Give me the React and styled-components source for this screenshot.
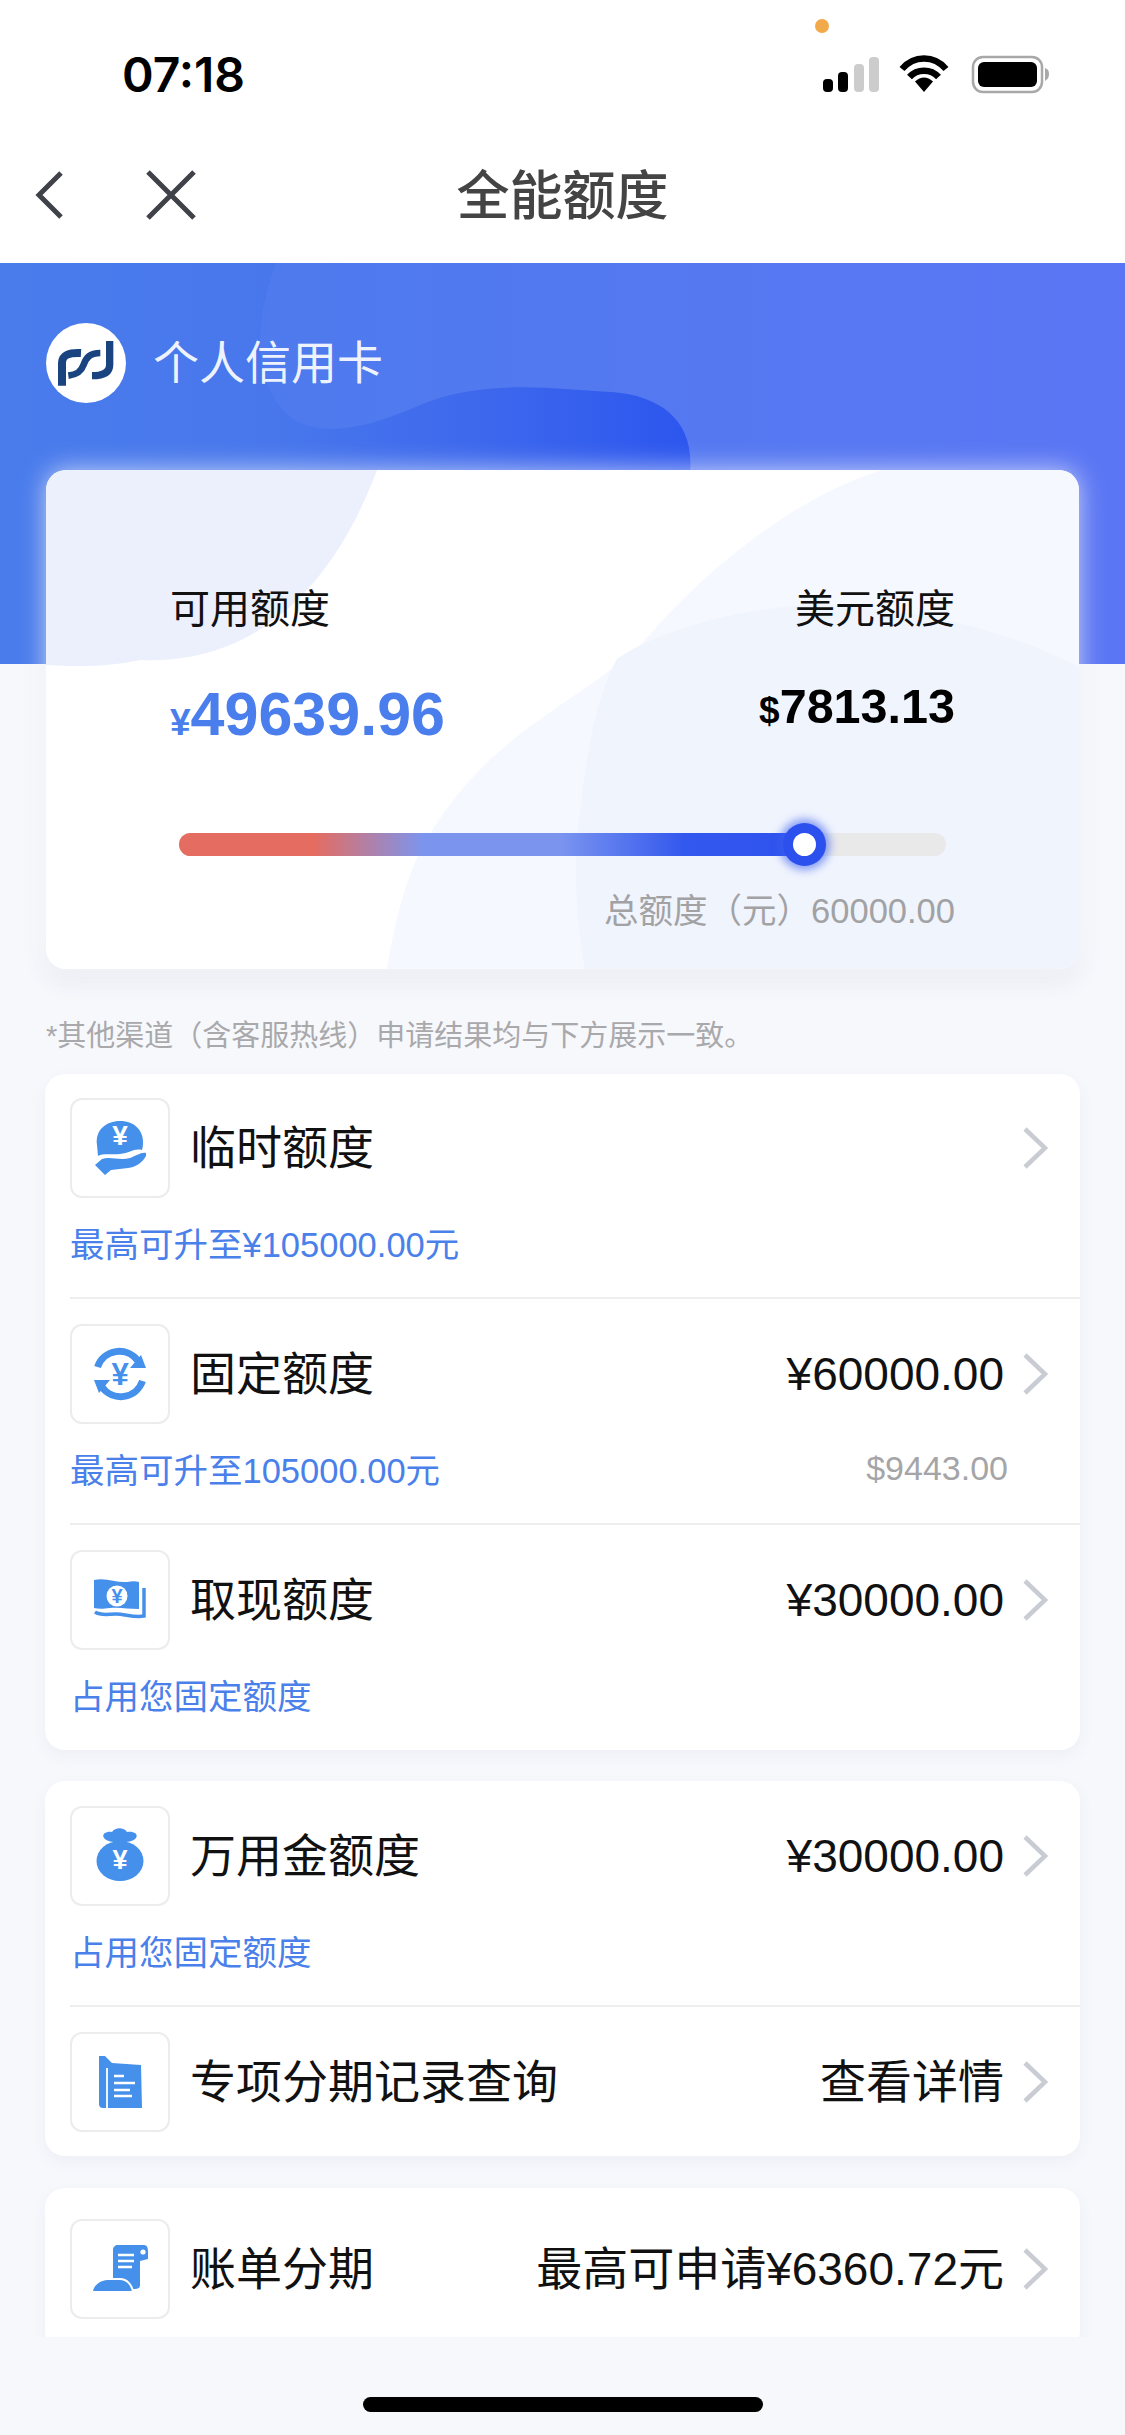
import React from "react";
import styled, { createGlobalStyle } from "styled-components";

const FONT = `"Liberation Sans", "Noto Sans CJK SC", sans-serif`;
const ICON_BLUE = "#4590ea";
const LINK_BLUE = "#4a80ea";

const GlobalStyle = createGlobalStyle`
    html, body {
        margin: 0;
        padding: 0;
        background: #f7f8fc;
    }
    * {
        box-sizing: border-box;
    }
`;

const Page = styled.div`
    width: 1125px;
    height: 2435px;
    display: flex;
    flex-direction: column;
    overflow: hidden;
    background: #f7f8fc;
    font-family: ${FONT};
`;

const StatusBar = styled.div`
    position: relative;
    height: 130px;
    flex-shrink: 0;
    background: #fff;
    display: flex;
    justify-content: space-between;
    align-items: flex-start;
    padding: 51px 72px 0 122px;
`;

const Time = styled.span`
    font-family: Inter, sans-serif;
    font-weight: 600;
    font-size: 48px;
    line-height: 48px;
    letter-spacing: 0;
    color: #000;
`;

const CameraDot = styled.span`
    position: absolute;
    left: 815px;
    top: 19px;
    width: 14px;
    height: 14px;
    border-radius: 50%;
    background: #f2a94a;
`;

const NavBar = styled.div`
    position: relative;
    height: 133px;
    flex-shrink: 0;
    background: #fff;
    display: flex;
    align-items: center;
    justify-content: center;
`;

const NavTitle = styled.h1`
    margin: 0;
    font-size: 53px;
    font-weight: 500;
    line-height: 64px;
    color: #444;
`;

const NavButtons = styled.div`
    position: absolute;
    left: 34px;
    top: 40px;
    display: flex;
    gap: 82px;
`;

const Scroller = styled.div`
    flex: 1;
    min-height: 0;
    overflow: hidden;
`;

const Hero = styled.div`
    position: relative;
    padding: 60px 46px 0 46px;
`;

const HeroBackdrop = styled.svg`
    position: absolute;
    left: 0;
    top: 0;
    width: 1125px;
    height: 401px;
    display: block;
`;

const Brand = styled.div`
    position: relative;
    display: flex;
    align-items: center;
    gap: 27px;
    height: 80px;
`;

const BrandLogo = styled.div`
    width: 80px;
    height: 80px;
    border-radius: 50%;
    background: #fff;
    overflow: hidden;
`;

const BrandName = styled.span`
    font-size: 46px;
    line-height: 60px;
    color: rgba(255, 255, 255, 0.92);
`;

const QuotaShadow = styled.div`
    position: relative;
    margin-top: 67px;
    border-radius: 20px;
    box-shadow: 0 0 26px rgba(255, 255, 255, 0.7), 0 12px 24px rgba(50, 70, 120, 0.09);
`;

const QuotaCard = styled.section`
    position: relative;
    width: 1033px;
    height: 499px;
    padding: 114px 124px 0;
    border-radius: 20px;
    overflow: hidden;
    background: #fff;
`;

const CardBackdrop = styled.svg`
    position: absolute;
    left: 0;
    top: 0;
    width: 1033px;
    height: 499px;
`;

const QuotaTop = styled.div`
    position: relative;
    display: flex;
    justify-content: space-between;
    height: 165px;
`;

const QuotaColumn = styled.div`
    display: flex;
    flex-direction: column;
    align-items: ${(p) => (p.$right ? "flex-end" : "flex-start")};
`;

const QuotaLabel = styled.div`
    font-size: 40px;
    line-height: 50px;
    color: #111;
`;

const QuotaAmount = styled.div`
    margin-top: ${(p) => p.$top}px;
    font-weight: 700;
    line-height: 70px;
    font-size: ${(p) => p.$size}px;
    color: ${(p) => p.$color};
    white-space: nowrap;
`;

const Currency = styled.span`
    font-size: 37px;
`;

const Track = styled.div`
    position: relative;
    height: 23px;
    margin: 84px 9px 0 9px;
    border-radius: 12px;
    background: #e9e9ea;
`;

const TrackFill = styled.div`
    height: 100%;
    border-radius: 12px 0 0 12px;
    background: linear-gradient(
        to right,
        #e56c60 0,
        #e56c60 135px,
        #7b95ef 245px,
        #7b95ef 380px,
        #3358ee 505px,
        #2f52ee 100%
    );
`;

const Thumb = styled.span`
    position: absolute;
    top: 0;
    width: 23px;
    height: 23px;
    margin-left: -11px;
    border-radius: 50%;
    background: #fff;
    box-shadow: 0 0 0 10px #2b50ee, 0 0 8px 14px rgba(60, 95, 240, 0.6);
`;

const TotalLine = styled.div`
    position: relative;
    margin-top: 35px;
    text-align: right;
    font-size: 34.5px;
    line-height: 40px;
    color: #a2a2a4;
`;

const Notice = styled.p`
    margin: 47px 46px 18px;
    font-size: 29px;
    line-height: 40px;
    color: #a9a9ac;
    white-space: nowrap;
`;

const Panel = styled.section`
    margin: ${(p) => p.$top || 0}px 45px 0;
    background: #fff;
    border-radius: 20px;
    box-shadow: 0 6px 16px rgba(60, 80, 130, 0.05);
`;

const Row = styled.div`
    margin-left: 25px;
    padding: ${(p) => p.$pt}px 32px ${(p) => p.$pb}px 0;
    border-top: ${(p) => (p.$line ? "2px solid #eeeeef" : "none")};
`;

const RowMain = styled.div`
    display: flex;
    align-items: center;
    height: 100px;
`;

const IconBox = styled.div`
    width: 100px;
    height: 100px;
    flex-shrink: 0;
    border: 2px solid #ececee;
    border-radius: 12px;
    background: #fff;
`;

const IconSvg = styled.svg`
    display: block;
    width: 96px;
    height: 96px;
`;

const RowTitle = styled.span`
    margin-left: 20px;
    font-size: 46px;
    line-height: 60px;
    color: #111;
    white-space: nowrap;
`;

const RowValue = styled.span`
    margin-left: auto;
    font-size: 46px;
    line-height: 60px;
    color: #111;
    white-space: nowrap;
`;

const Chevron = styled.svg`
    margin-left: ${(p) => (p.$solo ? "auto" : "19px")};
    width: 25px;
    height: 42px;
    flex-shrink: 0;
`;

const RowSub = styled.div`
    display: flex;
    justify-content: space-between;
    margin-top: 27px;
    padding-right: 40px;
    font-size: 34.5px;
    line-height: 40px;
`;

const SubLink = styled.span`
    color: ${LINK_BLUE};
    white-space: nowrap;
`;

const SubNote = styled.span`
    margin-top: -3px;
    font-size: 34px;
    color: #a5a5a8;
`;

const HomeBar = styled.div`
    height: 98px;
    flex-shrink: 0;
    display: flex;
    justify-content: center;
    padding-top: 60px;
    background: #f7f8fc;
`;

const HomeIndicator = styled.span`
    width: 400px;
    height: 15px;
    border-radius: 8px;
    background: #000;
`;

const StatusIcons = () => (
    <svg width="230" height="42" viewBox="823 54 230 42" style={{ marginTop: 3 }}>
        <rect x="823" y="79" width="10" height="13" rx="4" fill="#000" />
        <rect x="838" y="72" width="10" height="20" rx="4" fill="#000" />
        <rect x="854" y="64" width="10" height="28" rx="4" fill="#ccc" />
        <rect x="869" y="57" width="10" height="35" rx="4" fill="#ccc" />
        <path d="M902 69 C914 55 934 55 946 69" fill="none" stroke="#000" strokeWidth="6.5" />
        <path d="M909.5 77 C917 68.5 931 68.5 938.5 77" fill="none" stroke="#000" strokeWidth="6.5" />
        <path d="M915 81.5 C921 76 927 76 933 81.5 L924 92 Z" fill="#000" />
        <rect x="973" y="57" width="69" height="35" rx="10" fill="none" stroke="#a8a8a8" strokeWidth="2.5" />
        <rect x="978" y="62" width="59" height="25" rx="6" fill="#000" />
        <path d="M1045 68 C1048 69 1049 71 1049 74 C1049 77 1048 79 1045 81 Z" fill="#a8a8a8" />
    </svg>
);

const BrandMark = () => (
    <svg width="80" height="80" viewBox="45 70 240 240" fill="none" stroke="#1a4480">
        <path d="M93 258 L93 190 C93 166 115 158 150 160" strokeWidth="24" />
        <path d="M208 160 C175 160 165 175 158 195 C150 218 135 225 112 228" strokeWidth="20" />
        <path d="M236 124 L236 195 C236 220 215 228 183 228" strokeWidth="22" />
    </svg>
);

const YenMark = ({ x, y, size, color = "#fff" }) => (
    <text x={x} y={y} fontSize={size} fontWeight="700" fontFamily="Liberation Sans, sans-serif" fill={color} textAnchor="middle">
        ¥
    </text>
);

const HandCoinIcon = () => (
    <>
        <path d="M27 47 C25 32 36 23 50 23 C65 23 74 33 73 46 C73 48 72.5 50 72 52 C64 50 60 55 50 56 C42 57 33 55 28 58 Z" fill={ICON_BLUE} />
        <path d="M25 67 L32 61 C40 58 50 63 60 60 C66 58 71 54 76 55 L76 58 C72 65 66 69 58 70 L41 72 L35 77 Z" fill={ICON_BLUE} />
        <YenMark x={50} y={47} size={28} />
    </>
);

const ExchangeIcon = () => (
    <>
        <path d="M27.5 43 A23 23 0 0 1 68 37" fill="none" stroke={ICON_BLUE} strokeWidth="7" />
        <path d="M72.5 57 A23 23 0 0 1 32 63" fill="none" stroke={ICON_BLUE} strokeWidth="7" />
        <path d="M76 44 L60 44 L71 31 Z" fill={ICON_BLUE} />
        <path d="M24 56 L40 56 L29 69 Z" fill={ICON_BLUE} />
        <YenMark x={50} y={61} size={31} color={ICON_BLUE} />
    </>
);

const BillIcon = () => (
    <>
        <path d="M24 30 C36 27 46 33 57 32 C62 31 66 31 69 32 L69 59 C58 59 50 57 40 58 C33 59 28 59 24 58 Z" fill={ICON_BLUE} />
        <circle cx="47" cy="46" r="10.5" fill="#fff" />
        <YenMark x={47} y={53} size={20} color={ICON_BLUE} />
        <path d="M74 38 L74 66 C64 68 55 64 46 64 C38 64 31 66 25 62" fill="none" stroke={ICON_BLUE} strokeWidth="3.5" />
    </>
);

const MoneyBagIcon = () => (
    <>
        <ellipse cx="50" cy="55" rx="23.5" ry="20" fill={ICON_BLUE} />
        <path d="M34 32 C31 27 38 25 42 26 C45 21 54 21 57 26 C62 25 69 27 66 32 C62 38 38 38 34 32 Z" fill={ICON_BLUE} />
        <YenMark x={50} y={63} size={27} />
    </>
);

const FolderIcon = () => (
    <>
        <path d="M29 24 L35 24 L42 31 L71 33 L72 76 L33 76 C30 76 29 74 29 72 Z" fill={ICON_BLUE} />
        <path d="M37 36 L37 76" fill="none" stroke="#fff" strokeWidth="1.8" />
        <path d="M44 44 L54 44 M44 51 L65 51 M44 58 L60 58 M44 64 L62 64" fill="none" stroke="#fff" strokeWidth="2.4" />
    </>
);

const ScrollHandIcon = () => (
    <>
        <path d="M43 31 C43 28 45 26 48 26 L74 26 C77 26 78 29 78 32 L78 40 L70 42 L70 66 C70 69 68 70 65 70 L43 70 Z" fill={ICON_BLUE} />
        <circle cx="73" cy="33" r="2.6" fill="#fff" />
        <path d="M48 36 L64 36 M48 42 L64 42 M48 48 L62 48" fill="none" stroke="#fff" strokeWidth="2.6" />
        <path d="M22 73 C22 66 30 60 38 60 L50 60 C57 60 62 66 63 73 Z" fill={ICON_BLUE} stroke="#fff" strokeWidth="2" />
    </>
);

const RowIcon = ({ children }) => (
    <IconBox>
        <IconSvg viewBox="2 2 96 96">{children}</IconSvg>
    </IconBox>
);

const RowChevron = ({ solo }) => (
    <Chevron $solo={solo} viewBox="0 0 25 42" fill="none" stroke="#c9ccd3" strokeWidth="4.5">
        <path d="M2 2 L22 21 L2 40" />
    </Chevron>
);

const QuotaRow = ({ icon, title, value, sub, note, line, pt = 25, pb = 32 }) => (
    <Row $line={line} $pt={pt} $pb={pb}>
        <RowMain>
            <RowIcon>{icon}</RowIcon>
            <RowTitle>{title}</RowTitle>
            {value && <RowValue>{value}</RowValue>}
            <RowChevron solo={!value} />
        </RowMain>
        {sub && (
            <RowSub>
                <SubLink>{sub}</SubLink>
                {note && <SubNote>{note}</SubNote>}
            </RowSub>
        )}
    </Row>
);

const App = () => {
    const used = 624 / 766;

    return (
        <>
            <GlobalStyle />
            <Page>
                <StatusBar>
                    <Time>07:18</Time>
                    <CameraDot />
                    <StatusIcons />
                </StatusBar>
                <NavBar>
                    <NavButtons>
                        <svg width="30" height="50" viewBox="0 0 30 50" fill="none" stroke="#3f4248" strokeWidth="5">
                            <path d="M27 3 L5 25 L27 47" />
                        </svg>
                        <svg width="50" height="50" viewBox="0 0 50 50" fill="none" stroke="#3f4248" strokeWidth="5">
                            <path d="M2 2 L48 48 M48 2 L2 48" />
                        </svg>
                    </NavButtons>
                    <NavTitle>全能额度</NavTitle>
                </NavBar>
                <Scroller>
                    <Hero>
                        <HeroBackdrop viewBox="0 263 1125 401" preserveAspectRatio="none">
                            <defs>
                                <linearGradient id="heroBase" x1="0" x2="1" y1="0" y2="0">
                                    <stop offset="0" stopColor="#4a7cec" />
                                    <stop offset="1" stopColor="#5b76f4" />
                                </linearGradient>
                                <linearGradient id="heroWave" gradientUnits="userSpaceOnUse" x1="0" x2="690" y1="0" y2="0">
                                    <stop offset="0" stopColor="#4a7cec" />
                                    <stop offset="0.4" stopColor="#4877ec" />
                                    <stop offset="0.7" stopColor="#3d68ed" />
                                    <stop offset="1" stopColor="#2c56ee" />
                                </linearGradient>
                            </defs>
                            <rect x="0" y="263" width="1125" height="401" fill="url(#heroBase)" />
                            <path
                                d="M276 263 C255 320 250 385 292 418 C325 440 375 425 425 403 C490 378 560 390 612 392 C665 396 698 425 689 480 L689 664 L0 664 L0 263 Z"
                                fill="url(#heroWave)"
                            />
                        </HeroBackdrop>
                        <Brand>
                            <BrandLogo>
                                <BrandMark />
                            </BrandLogo>
                            <BrandName>个人信用卡</BrandName>
                        </Brand>
                        <QuotaShadow>
                            <QuotaCard>
                                <CardBackdrop viewBox="0 0 1033 499">
                                    <path d="M0 0 L331 0 C290 110 215 195 95 190 C60 197 30 197 0 195 Z" fill="#ebf0fc" />
                                    <path d="M341 499 C352 430 368 385 391 353 C455 255 540 230 599 170 C650 110 740 30 836 0 L1033 0 L1033 499 Z" fill="#f5f8fe" />
                                    <path d="M539 499 C528 440 528 380 535 334 C541 280 552 222 571 189 C602 166 690 135 779 135 C880 140 960 160 1033 197 L1033 499 Z" fill="#f0f4fd" />
                                </CardBackdrop>
                                <QuotaTop>
                                    <QuotaColumn>
                                        <QuotaLabel>可用额度</QuotaLabel>
                                        <QuotaAmount $top={45} $size={61} $color="#4a7eec">
                                            <Currency>¥</Currency>49639.96
                                        </QuotaAmount>
                                    </QuotaColumn>
                                    <QuotaColumn $right>
                                        <QuotaLabel>美元额度</QuotaLabel>
                                        <QuotaAmount $top={37} $size={48.5} $color="#000">
                                            <Currency>$</Currency>7813.13
                                        </QuotaAmount>
                                    </QuotaColumn>
                                </QuotaTop>
                                <Track>
                                    <TrackFill style={{ width: `${used * 100}%` }} />
                                    <Thumb style={{ left: `${used * 100}%` }} />
                                </Track>
                                <TotalLine>总额度（元）60000.00</TotalLine>
                            </QuotaCard>
                        </QuotaShadow>
                    </Hero>
                    <Notice>*其他渠道（含客服热线）申请结果均与下方展示一致。</Notice>
                    <Panel>
                        <QuotaRow icon={<HandCoinIcon />} title="临时额度" sub="最高可升至¥105000.00元" pt={24} />
                        <QuotaRow
                            line
                            icon={<ExchangeIcon />}
                            title="固定额度"
                            value="¥60000.00"
                            sub="最高可升至105000.00元"
                            note="$9443.00"
                        />
                        <QuotaRow line icon={<BillIcon />} title="取现额度" value="¥30000.00" sub="占用您固定额度" pb={33} />
                    </Panel>
                    <Panel $top={31}>
                        <QuotaRow icon={<MoneyBagIcon />} title="万用金额度" value="¥30000.00" sub="占用您固定额度" />
                        <QuotaRow line icon={<FolderIcon />} title="专项分期记录查询" value="查看详情" pb={24} />
                    </Panel>
                    <Panel $top={32}>
                        <QuotaRow icon={<ScrollHandIcon />} title="账单分期" value="最高可申请¥6360.72元" pt={31} />
                    </Panel>
                </Scroller>
                <HomeBar>
                    <HomeIndicator />
                </HomeBar>
            </Page>
        </>
    );
};

export default App;
